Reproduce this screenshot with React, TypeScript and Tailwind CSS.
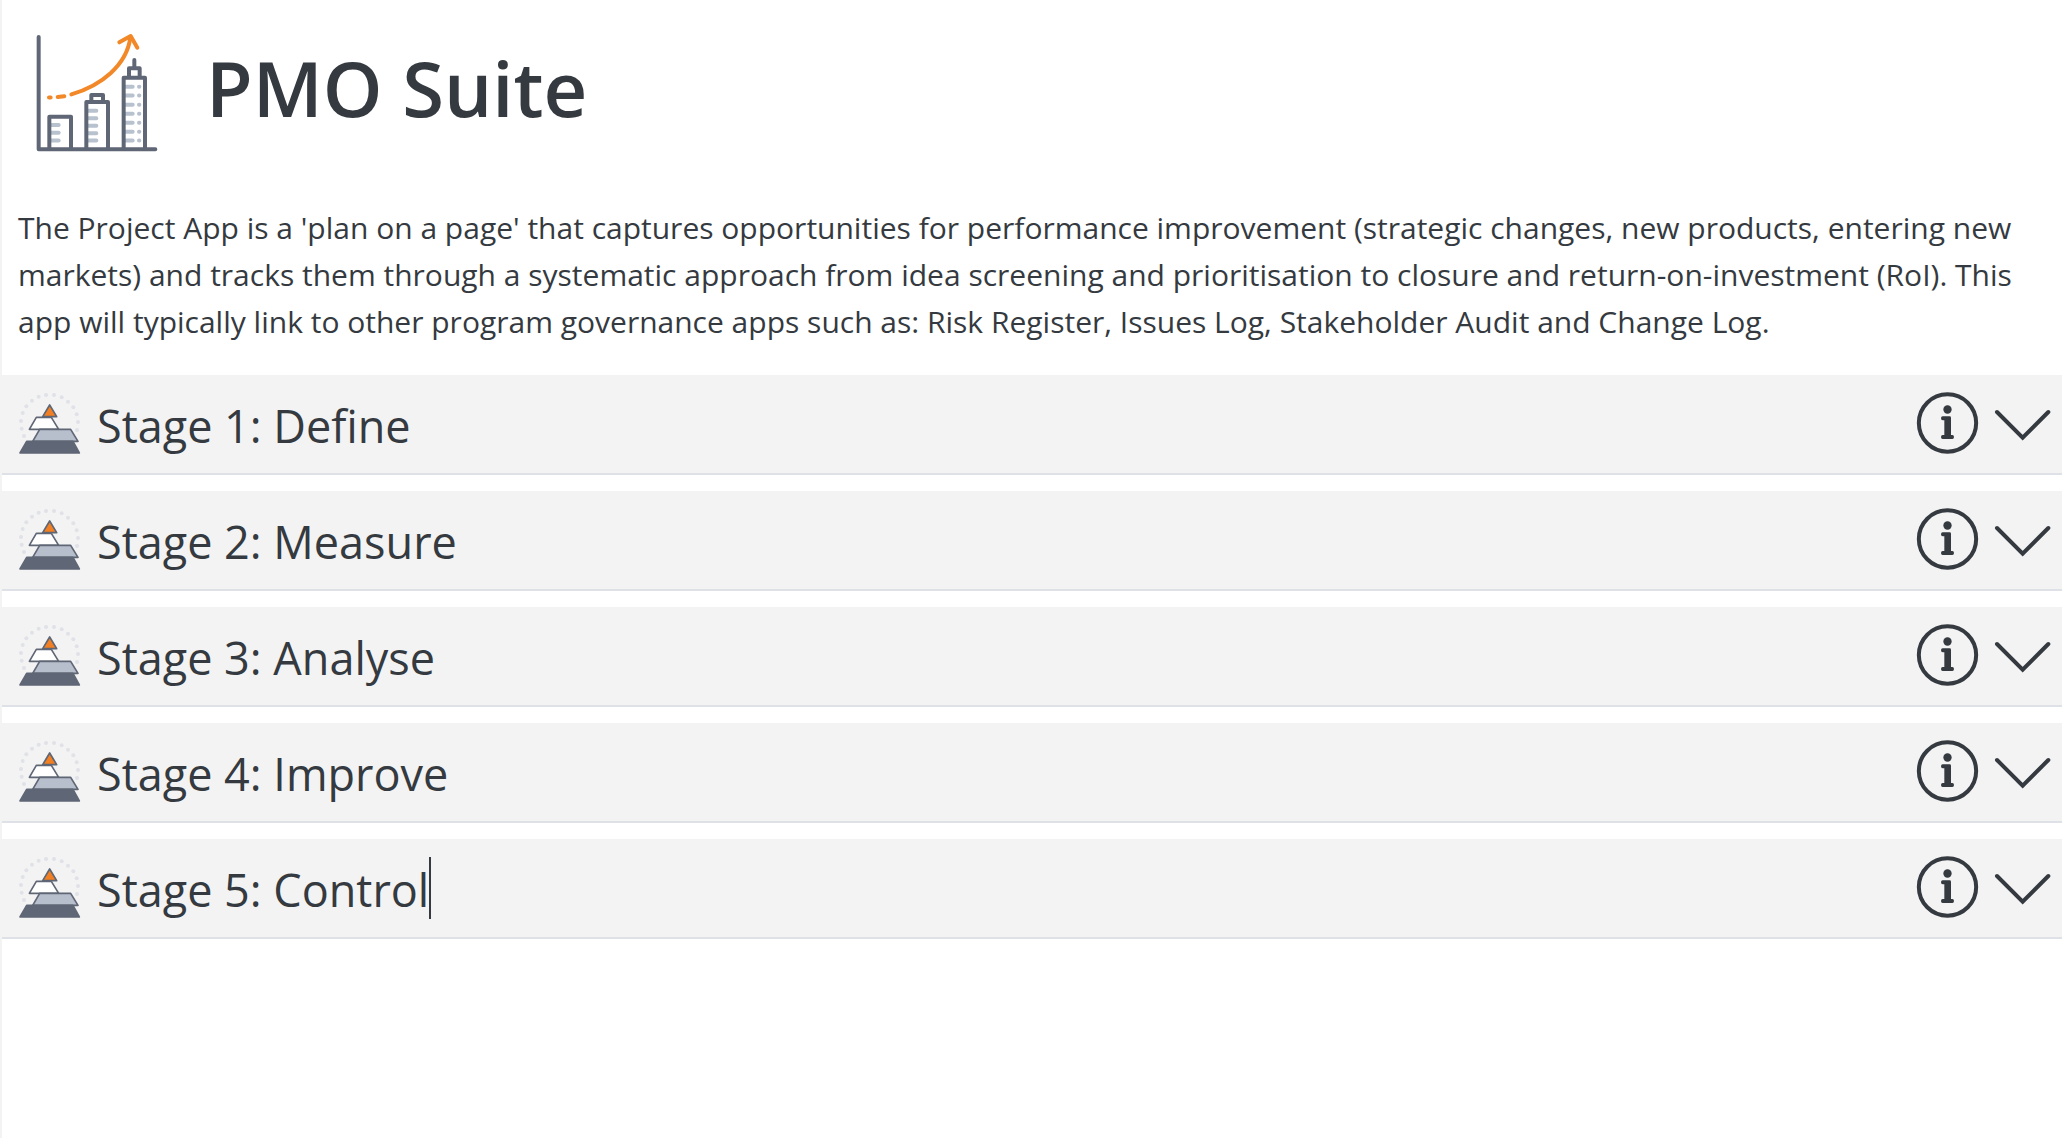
const stages = ["Stage 1: Define", "Stage 2: Measure", "Stage 3: Analyse", "Stage 4: Improve", "Stage 5: Control"];

const dots = [
  [138, 75], [162, 75], [185, 82], [204, 95], [220, 112], [230, 133], [234, 156], [231, 180],
  [116, 80], [96, 92], [79, 109], [68, 129], [63, 153], [65, 176], [72, 198],
];

function GrowthLogo() {
  return (
    <svg className="size-32 shrink-0" viewBox="97 84 384 384" fill="none" aria-hidden="true">
      <g stroke="#b8c1ce" strokeWidth="12" strokeLinecap="round">
        <path d="M154 375h23M154 398.500h23M154 421.500h23" />
        <path d="M266 332h24M266 354.500h24M266 377h24M266 399.500h24M266 421.500h24" />
        <path d="M378 260h21M378 286.500h21M378 314h21M378 341h21M378 368h21M378 395h21M378 421.500h21" />
        <path d="M418 260h1M418 286.500h1M418 314h1M418 341h1M418 368h1M418 395h1M418 421.500h1" />
      </g>
      <g stroke="#5f6675" strokeWidth="12" strokeLinecap="round" strokeLinejoin="round">
        <path d="M117 111v337h350" />
        <path d="M149 446v-96h65v96" />
        <path d="M260 446V306h65v140M275 304v-19h35v19" />
        <path d="M372 446V233h64v213M388 231v-26h32v26M404 203v-23" />
      </g>
      <g stroke="#f28827" strokeWidth="12" strokeLinecap="round" strokeLinejoin="round">
        <path d="M148 292.500h5M174 291l20-2.500M215 283C305 257 382 195 392 112" />
        <path d="M359 127l34-19 20 35" />
      </g>
    </svg>
  );
}

function PyramidIcon() {
  return (
    <svg className="size-16 shrink-0" viewBox="54 63 192 192" aria-hidden="true">
      {dots.map(([x, y]) => (
        <circle key={`${x}-${y}`} cx={x} cy={y} r="6" fill="#e0e2e8" />
      ))}
      <g stroke="#5f6675" strokeWidth="5" strokeLinejoin="round">
        <path d="M149 105l21 35h-42z" fill="#f28022" />
        <path d="M109 142h45l22 36H88z" fill="#fff" />
        <path d="M119 178h93l22 36H98z" fill="#b8bfcc" />
        <path d="M80 214h139l19 35H60z" fill="#5f6675" />
      </g>
    </svg>
  );
}

function InfoIcon() {
  return (
    <svg className="size-16" viewBox="108 64 192 192" fill="none" stroke="#343a40" aria-hidden="true">
      <circle cx="202.500" cy="160" r="86" strokeWidth="12" />
      <circle cx="202.500" cy="119.500" r="12.500" fill="#343a40" stroke="none" />
      <path
        d="M188 140h21q4 0 4 4v52h4q5 0 5 6t-5 6h-29q-5 0-5-6t5-6h5v-44h-5q-5 0-5-6t5-6z"
        fill="#343a40"
        stroke="none"
      />
    </svg>
  );
}

function ChevronIcon() {
  return (
    <svg className="size-16" viewBox="336 64 192 192" fill="none" stroke="#343a40" aria-hidden="true">
      <path d="M351 127l77 77 77-77" strokeWidth="12" strokeLinecap="round" />
    </svg>
  );
}

function StageRow({ title, editing }: { title: string; editing: boolean }) {
  return (
    <section className="flex h-[100px] items-start border-b-2 border-[#dee2e6] bg-[#f3f3f3] pt-4 pr-1.5 pl-4">
      <PyramidIcon />
      <div className="ml-[15px] flex flex-1 items-start">
        <h2 className="text-[45px] leading-[70px] whitespace-nowrap">{title}</h2>
        {editing && <span className="mt-0.5 h-[62px] w-0.5 bg-[#343a40]" />}
      </div>
      <div className="flex gap-3">
        <button type="button" aria-label={`About ${title}`}>
          <InfoIcon />
        </button>
        <button type="button" aria-label={`Expand ${title}`}>
          <ChevronIcon />
        </button>
      </div>
    </section>
  );
}

export default function App() {
  return (
    <main className="min-h-screen border-l-2 border-[#f3f3f3] bg-white font-['Open_Sans',sans-serif] text-[#343a40]">
      <header className="flex items-start gap-[46px] pt-7 pl-[30px]">
        <GrowthLogo />
        <h1 className="text-[76px] leading-[120px] font-semibold">PMO Suite</h1>
      </header>
      <p className="mt-12 px-4 text-[30px] leading-[47px]">
        The Project App is a 'plan on a page' that captures opportunities for performance improvement (strategic
        changes, new products, entering new markets) and tracks them through a systematic approach from idea screening
        and prioritisation to closure and return-on-investment (RoI). This app will typically link to other program
        governance apps such as: Risk Register, Issues Log, Stakeholder Audit and Change Log.
      </p>
      <div className="mt-[30px] flex flex-col gap-4">
        {stages.map((title, i) => (
          <StageRow key={title} title={title} editing={i === stages.length - 1} />
        ))}
      </div>
    </main>
  );
}
